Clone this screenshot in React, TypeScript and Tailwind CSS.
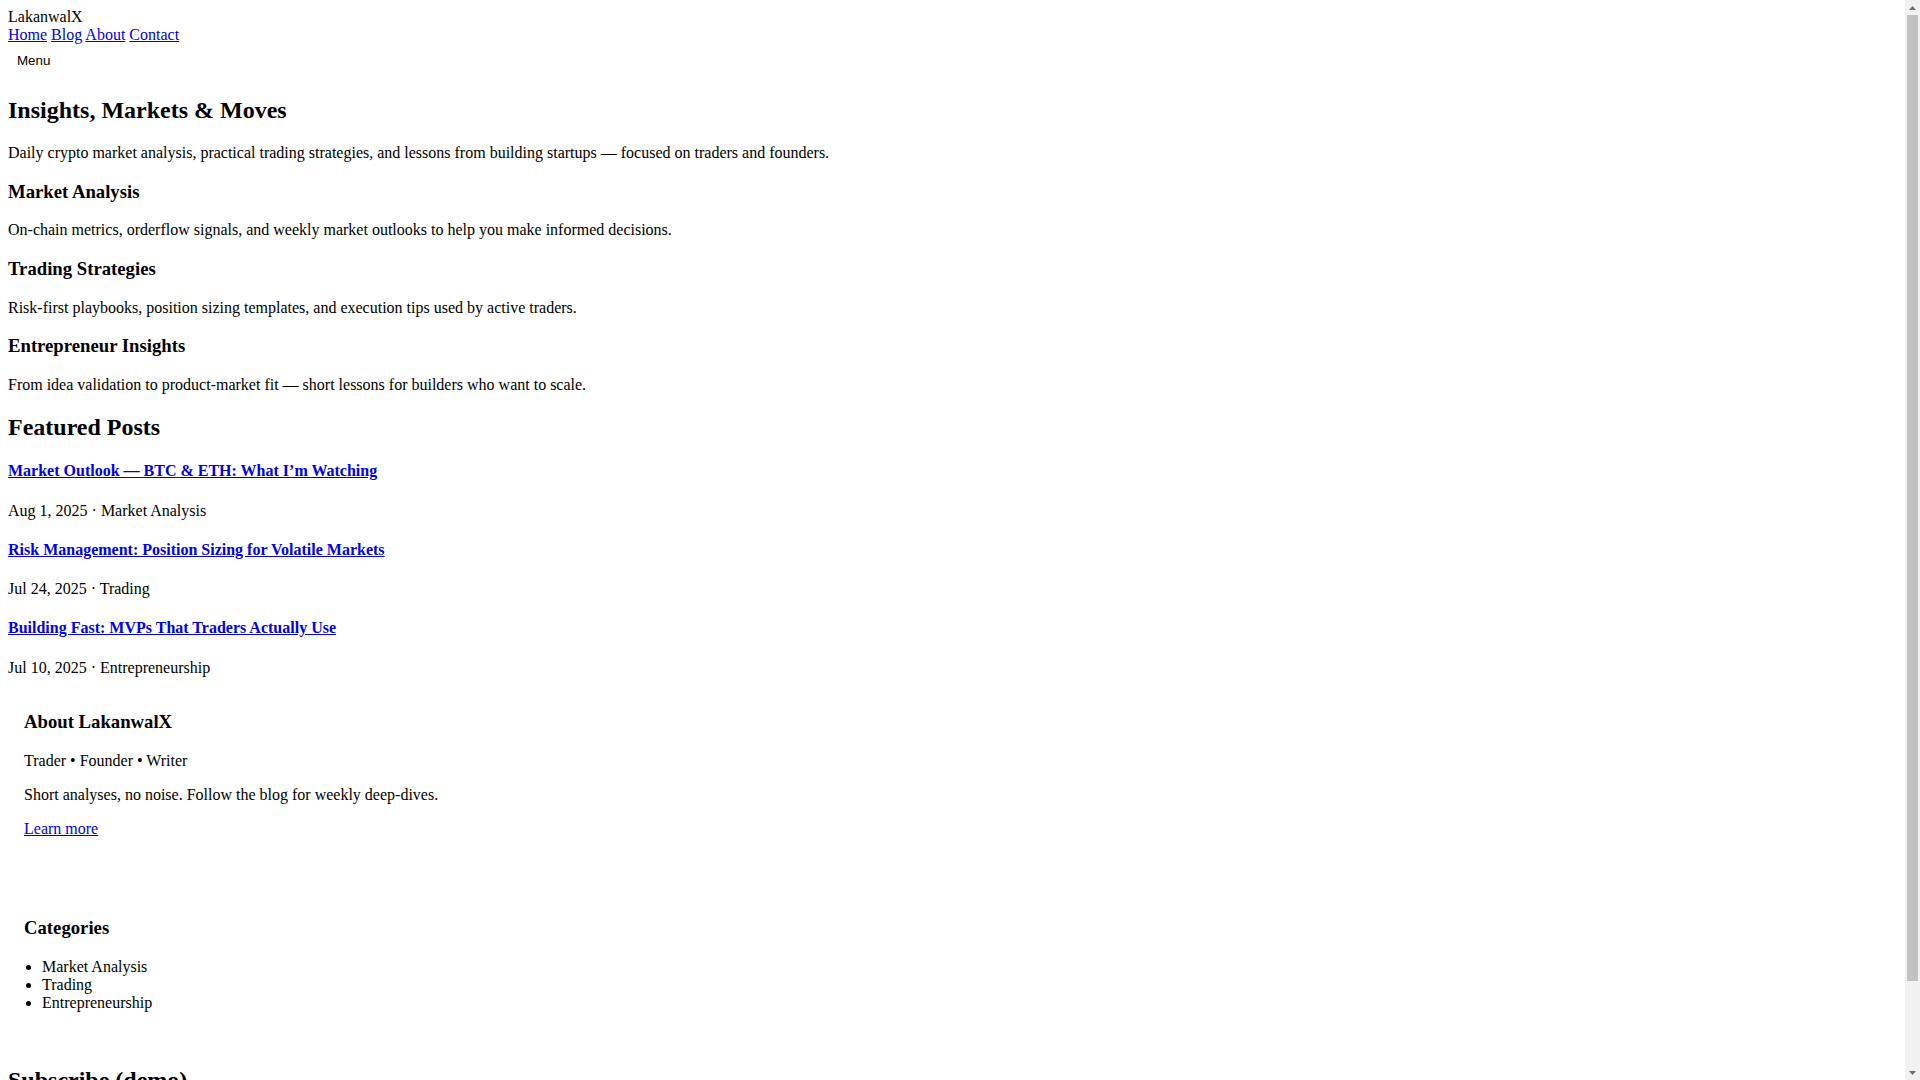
import React from "react";

const posts = [
  { title: "Market Outlook — BTC & ETH: What I’m Watching", meta: "Aug 1, 2025 · Market Analysis" },
  { title: "Risk Management: Position Sizing for Volatile Markets", meta: "Jul 24, 2025 · Trading" },
  { title: "Building Fast: MVPs That Traders Actually Use", meta: "Jul 10, 2025 · Entrepreneurship" },
];

const topics = [
  {
    title: "Market Analysis",
    text: "On-chain metrics, orderflow signals, and weekly market outlooks to help you make informed decisions.",
  },
  {
    title: "Trading Strategies",
    text: "Risk-first playbooks, position sizing templates, and execution tips used by active traders.",
  },
  {
    title: "Entrepreneur Insights",
    text: "From idea validation to product-market fit — short lessons for builders who want to scale.",
  },
];

function Scrollbar() {
  return (
    <div className="fixed right-0 top-0 h-screen w-[15px] bg-[#f1f1f1] flex flex-col items-center">
      <div className="h-[15px] w-full flex items-center justify-center">
        <svg width="7" height="4" viewBox="0 0 7 4">
          <polygon points="3.5,0 7,4 0,4" fill="#6e6e6e" />
        </svg>
      </div>
      <div className="w-[11px] h-[966px] bg-[#c1c1c1]" />
      <div className="flex-1" />
      <div className="h-[15px] w-full flex items-center justify-center">
        <svg width="7" height="4" viewBox="0 0 7 4">
          <polygon points="0,0 7,0 3.5,4" fill="#6e6e6e" />
        </svg>
      </div>
    </div>
  );
}

export default function App() {
  return (
    <div className="bg-white text-black font-['Liberation_Serif','Times_New_Roman',serif] text-[16px] leading-[normal] p-[8px] pr-[23px]">
      <header>
        <div>LakanwalX</div>
        <nav>
          <a href="#" className="text-[#0000ee] underline">Home</a>{" "}
          <a href="#" className="text-[#0000ee] underline">Blog</a>{" "}
          <a href="#" className="text-[#0000ee] underline">About</a>{" "}
          <a href="#" className="text-[#0000ee] underline">Contact</a>
        </nav>
        <button className="block p-[8px] bg-transparent border border-transparent text-black font-['Liberation_Sans',Arial,sans-serif] text-[13.333px] leading-[normal]">
          Menu
        </button>
      </header>

      <main>
        <section>
          <h1 className="text-[24px] font-bold leading-[normal] my-[19.92px]">Insights, Markets &amp; Moves</h1>
          <p className="my-[16px]">
            Daily crypto market analysis, practical trading strategies, and lessons from building startups — focused on traders and founders.
          </p>
          {topics.map((t) => (
            <div key={t.title}>
              <h3 className="text-[18.72px] font-bold leading-[normal] my-[18.72px]">{t.title}</h3>
              <p className="my-[16px]">{t.text}</p>
            </div>
          ))}
        </section>

        <section>
          <h2 className="text-[24px] font-bold leading-[normal] my-[19.92px]">Featured Posts</h2>
          {posts.map((p) => (
            <article key={p.title}>
              <h4 className="text-[16px] font-bold leading-[normal] my-[21.28px]">
                <a href="#" className="text-[#0000ee] underline">{p.title}</a>
              </h4>
              <p className="my-[16px]">{p.meta}</p>
            </article>
          ))}
        </section>

        <aside>
          <div className="px-[16px] pt-[18.4px] pb-[16px]">
            <h3 className="text-[18.72px] font-bold leading-[normal] mt-0 mb-[19.2px]">About LakanwalX</h3>
            <p className="my-[16px]">Trader • Founder • Writer</p>
            <p className="my-[16px]">Short analyses, no noise. Follow the blog for weekly deep-dives.</p>
            <p className="my-[16px]">
              <a href="#" className="text-[#0000ee] underline">Learn more</a>
            </p>
          </div>
          <div className="p-[16px] mt-[31.2px]">
            <h3 className="text-[18.72px] font-bold leading-[normal] mt-0 mb-[18.72px]">Categories</h3>
            <ul className="list-disc pl-[18px] my-[16px]">
              <li>Market Analysis</li>
              <li>Trading</li>
              <li>Entrepreneurship</li>
            </ul>
          </div>
        </aside>

        <section>
          <h2 className="text-[24px] font-bold leading-[normal] mt-[23px] mb-[19.92px]">Subscribe (demo)</h2>
          <form onSubmit={(e) => e.preventDefault()}>
            <input
              type="email"
              placeholder="you@example.com"
              className="border border-[#767676] px-[2px] py-[1px] text-[13.333px] font-['Liberation_Sans',Arial,sans-serif]"
            />{" "}
            <button className="border border-[#767676] bg-[#efefef] px-[6px] py-[1px] text-[13.333px] font-['Liberation_Sans',Arial,sans-serif]">
              Subscribe
            </button>
          </form>
        </section>
      </main>

      <footer>
        <p className="my-[16px]">© 2025 LakanwalX</p>
      </footer>
      <Scrollbar />
    </div>
  );
}
